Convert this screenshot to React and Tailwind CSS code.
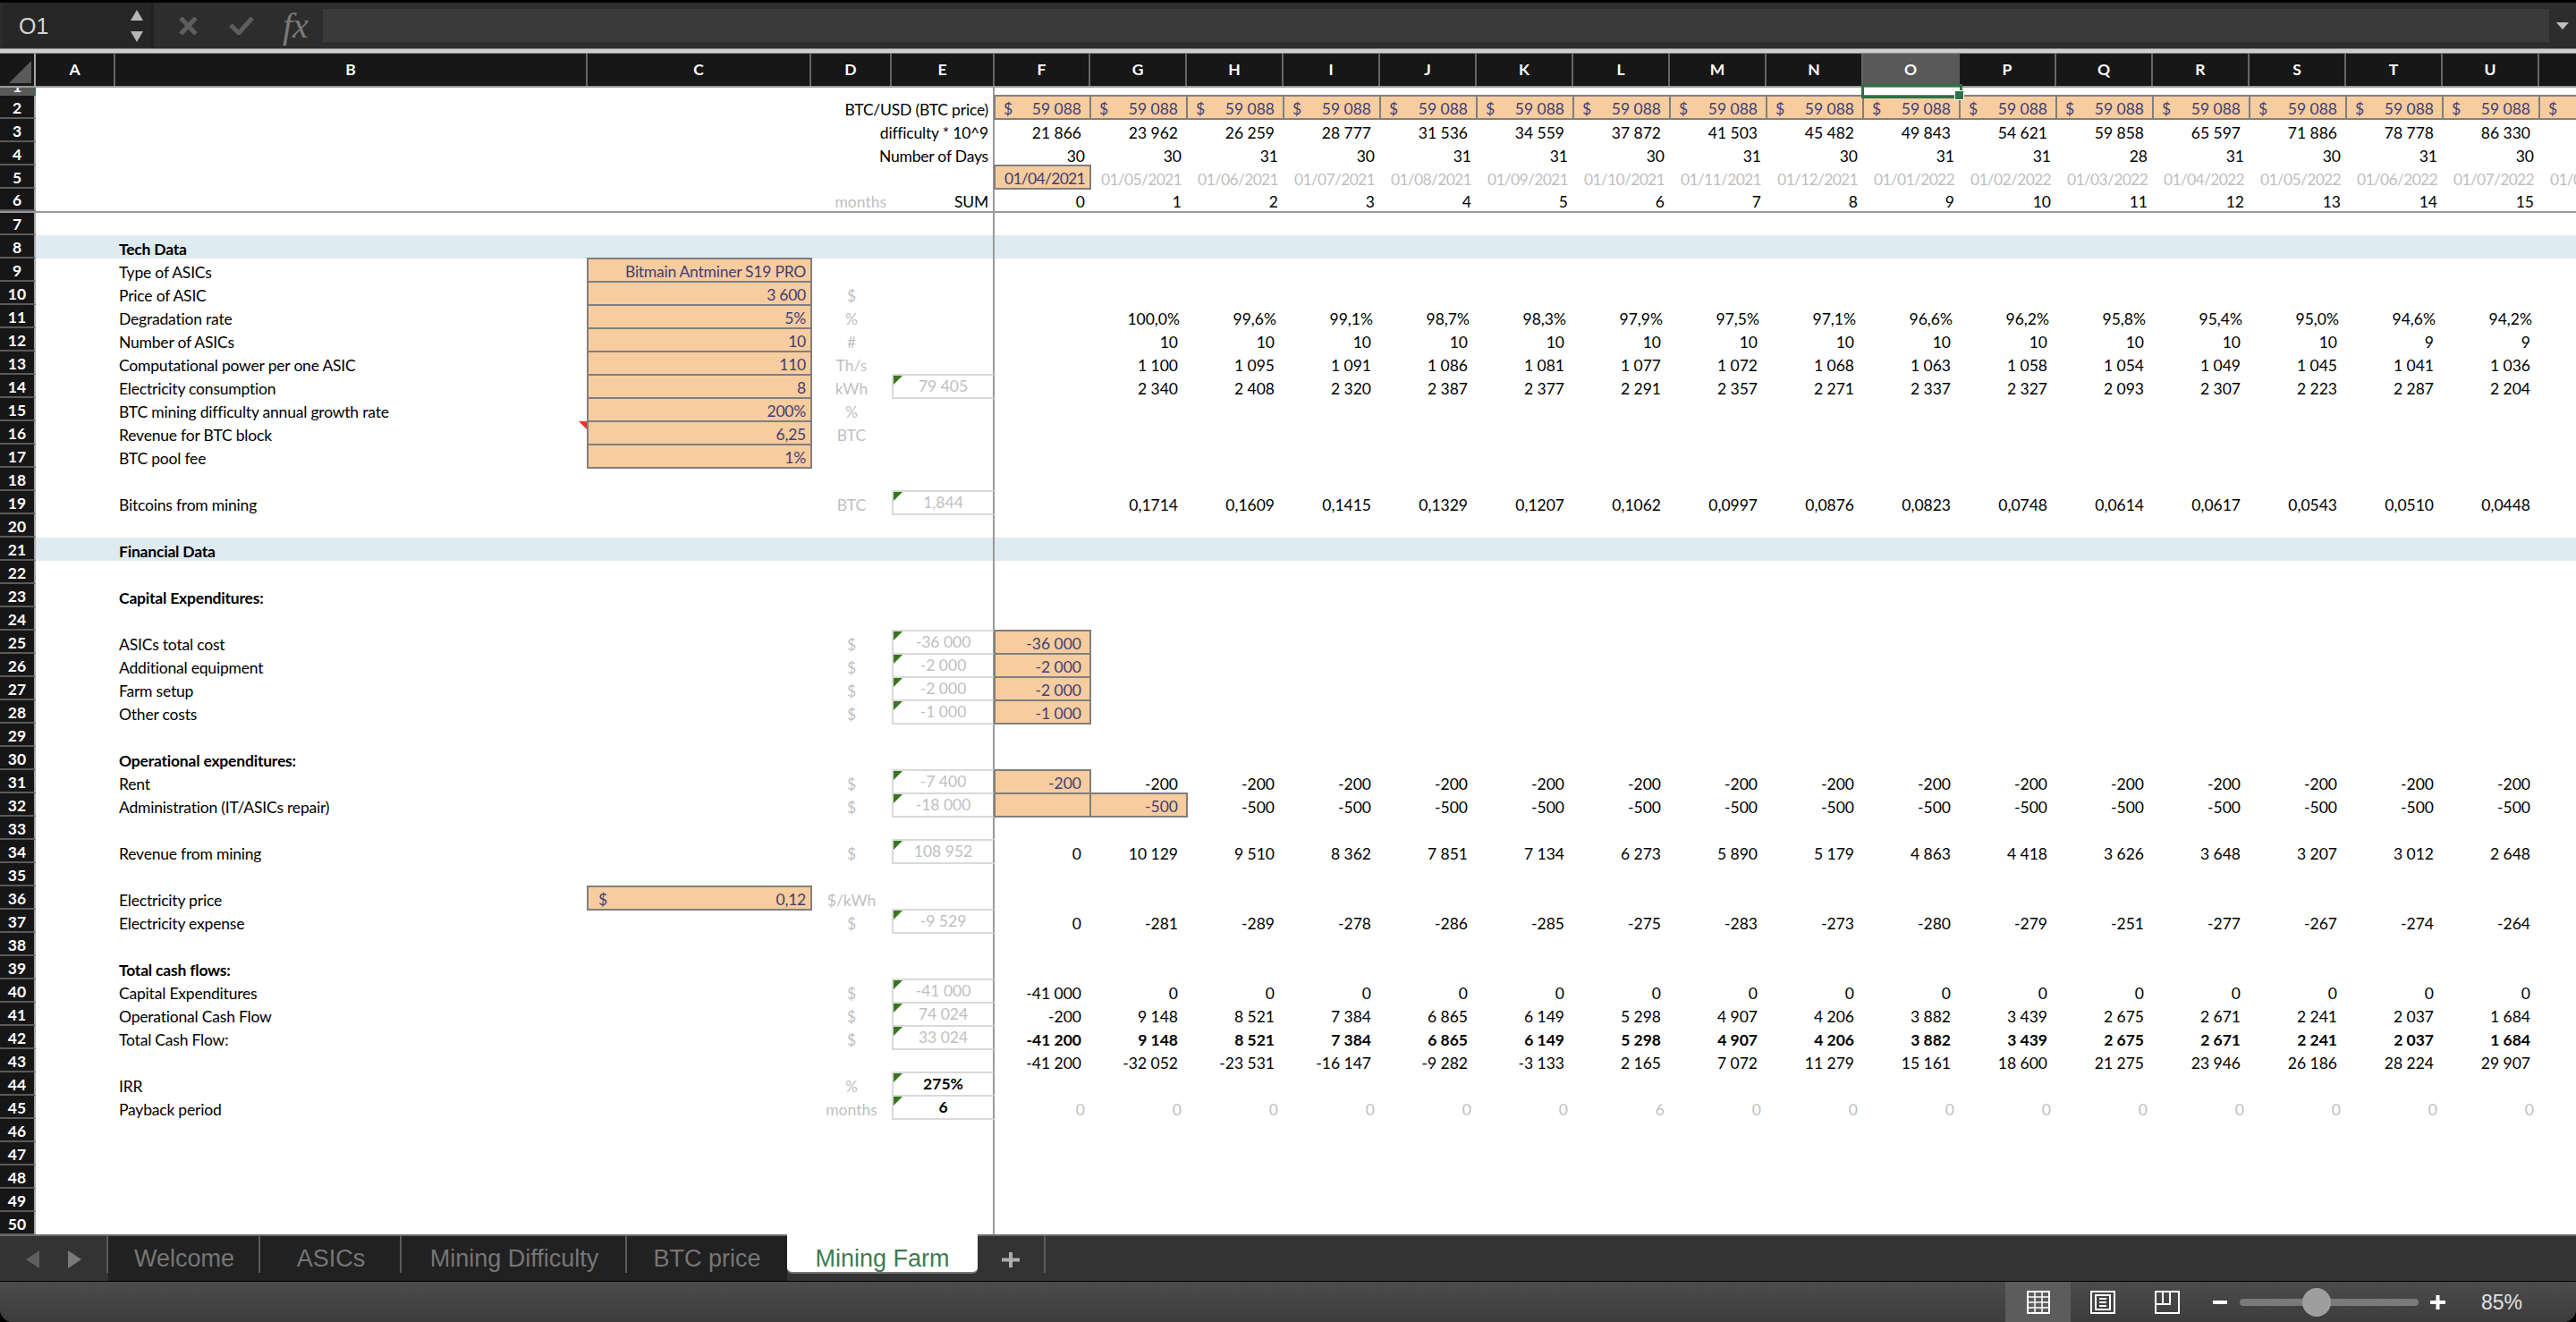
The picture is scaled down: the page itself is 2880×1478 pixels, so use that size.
import React from 'react';

// sheet columns: row header, A..E, F..V
const GRID = 'grid grid-cols-[40px_89px_528px_250px_90px_115px_107px_repeat(16,108px)]';
const LETTERS = 'ABCDEFGHIJKLMNOPQRSTU'.split('');

const list = (s) => s.split(',').map((v) => v.trim());
const dates = list('01/04/2021,01/05/2021,01/06/2021,01/07/2021,01/08/2021,01/09/2021,01/10/2021,01/11/2021,01/12/2021,01/01/2022,01/02/2022,01/03/2022,01/04/2022,01/05/2022,01/06/2022,01/07/2022,01/08/2022');
const pct = list('100.0%,99.6%,99.1%,98.7%,98.3%,97.9%,97.5%,97.1%,96.6%,96.2%,95.8%,95.4%,95.0%,94.6%,94.2%').map((v) => v.replace('.', ','));
const btc = ['0,1714', '0,1609', '0,1415', '0,1329', '0,1207', '0,1062', '0,0997', '0,0876', '0,0823', '0,0748', '0,0614', '0,0617', '0,0543', '0,0510', '0,0448'];
const opCash = list('9 148,8 521,7 384,6 865,6 149,5 298,4 907,4 206,3 882,3 439,2 675,2 671,2 241,2 037,1 684');

const ROWS = {
  2: { eRight: 'BTC/USD (BTC price)', vals: [...Array(16).fill('59 088'), ''], orange: 17, dollar: true },
  3: { eRight: 'difficulty * 10^9', vals: list('21 866,23 962,26 259,28 777,31 536,34 559,37 872,41 503,45 482,49 843,54 621,59 858,65 597,71 886,78 778,86 330') },
  4: { eRight: 'Number of Days', vals: list('30,30,31,30,31,31,30,31,30,31,31,28,31,30,31,30'), pr: 'pr-[6px]' },
  5: { vals: dates, orange: 1, muted: true, pr: 'pr-[6px] tracking-[-0.7px]', orangePr: 'pr-[5px] tracking-[-0.7px]' },
  6: { dRight: 'months', eRight: 'SUM', vals: Array.from({ length: 16 }, (_, i) => String(i)), pr: 'pr-[6px]' },
  8: { label: 'Tech Data', bold: true, band: true },
  9: { label: 'Type of ASICs', c: 'Bitmain Antminer S19 PRO' },
  10: { label: 'Price of ASIC', c: '3 600', d: '$' },
  11: { label: 'Degradation rate', c: '5%', d: '%', vals: [null, ...pct], pr: 'pr-[8px]' },
  12: { label: 'Number of ASICs', c: '10', d: '#', vals: [null, ...list('10,10,10,10,10,10,10,10,10,10,10,10,10,9,9')] },
  13: { label: 'Computational power per one ASIC', c: '110', d: 'Th/s', vals: [null, ...list('1 100,1 095,1 091,1 086,1 081,1 077,1 072,1 068,1 063,1 058,1 054,1 049,1 045,1 041,1 036')] },
  14: { label: 'Electricity consumption', c: '8', d: 'kWh', e: '79 405', vals: [null, ...list('2 340,2 408,2 320,2 387,2 377,2 291,2 357,2 271,2 337,2 327,2 093,2 307,2 223,2 287,2 204')] },
  15: { label: 'BTC mining difficulty annual growth rate', c: '200%', d: '%' },
  16: { label: 'Revenue for BTC block', c: '6,25', d: 'BTC', note: true },
  17: { label: 'BTC pool fee', c: '1%' },
  19: { label: 'Bitcoins from mining', d: 'BTC', e: '1,844', vals: [null, ...btc] },
  21: { label: 'Financial Data', bold: true, band: true },
  23: { label: 'Capital Expenditures:', bold: true },
  25: { label: 'ASICs total cost', d: '$', e: '-36 000', vals: ['-36 000'], orange: 1 },
  26: { label: 'Additional equipment', d: '$', e: '-2 000', vals: ['-2 000'], orange: 1 },
  27: { label: 'Farm setup', d: '$', e: '-2 000', vals: ['-2 000'], orange: 1 },
  28: { label: 'Other costs', d: '$', e: '-1 000', vals: ['-1 000'], orange: 1 },
  30: { label: 'Operational expenditures:', bold: true },
  31: { label: 'Rent', d: '$', e: '-7 400', vals: Array(16).fill('-200'), orange: 1 },
  32: { label: 'Administration (IT/ASICs repair)', d: '$', e: '-18 000', vals: [null, ...Array(15).fill('-500')], orange: 2 },
  34: { label: 'Revenue from mining', d: '$', e: '108 952', vals: list('0,10 129,9 510,8 362,7 851,7 134,6 273,5 890,5 179,4 863,4 418,3 626,3 648,3 207,3 012,2 648') },
  36: { label: 'Electricity price', c: '0,12', cDollar: true, d: '$/kWh' },
  37: { label: 'Electricity expense', d: '$', e: '-9 529', vals: list('0,-281,-289,-278,-286,-285,-275,-283,-273,-280,-279,-251,-277,-267,-274,-264') },
  39: { label: 'Total cash flows:', bold: true },
  40: { label: 'Capital Expenditures', d: '$', e: '-41 000', vals: ['-41 000', ...Array(15).fill('0')] },
  41: { label: 'Operational Cash Flow', d: '$', e: '74 024', vals: ['-200', ...opCash] },
  42: { label: 'Total Cash Flow:', d: '$', e: '33 024', vals: ['-41 200', ...opCash], boldVals: true },
  43: { vals: list('-41 200,-32 052,-23 531,-16 147,-9 282,-3 133,2 165,7 072,11 279,15 161,18 600,21 275,23 946,26 186,28 224,29 907') },
  44: { label: 'IRR', d: '%', e: '275%', eBold: true },
  45: { label: 'Payback period', d: 'months', e: '6', eBold: true, vals: list('0,0,0,0,0,0,6,0,0,0,0,0,0,0,0,0'), muted: true, pr: 'pr-[6px]' },
};

const RowHead = ({ n, active }) => (
  <div className={`flex items-end justify-center overflow-hidden font-bold text-white border-r-2 ${active ? 'bg-[#595959] border-r-[#2f6f48]' : 'bg-[#161616] border-r-[#a8a8a8] border-b-2 border-b-[#5a5a5a]'}`}>
    {n}
  </div>
);

const CommentMark = () => (
  <span className="absolute left-0 top-0 w-[10px] h-[10px] bg-[#38761d] [clip-path:polygon(0_0,100%_0,0_100%)]" />
);

const ValueCell = ({ row, value, index }) => {
  const isOrange = index < (row.orange || 0);
  if (isOrange) {
    return (
      <div className={`flex items-end justify-end whitespace-nowrap -mx-[1px] -my-[1px] border-2 border-[#7f7f7f] bg-[#f7cc9e] text-[#3f3f76] relative ${row.orangePr || 'pr-[9px]'}`}>
        {row.dollar && <span className="absolute left-[9px] bottom-0">$</span>}
        {value}
      </div>
    );
  }
  if (!value) return <div />;
  const tone = row.muted ? 'text-[#bfbfbf]' : row.boldVals ? 'font-bold text-black' : 'text-black';
  return (
    <div className={`flex items-end justify-end whitespace-nowrap ${row.pr || 'pr-[10px]'} ${tone}`}>
      {value}
    </div>
  );
};

const SheetRow = ({ n }) => {
  const row = ROWS[n] || {};
  const height = n === 6 ? 'h-[27px] border-b-2 border-[#9a9a9a]' : n === 7 ? 'h-[25px]' : 'h-[26px]';
  return (
    <div className={`${GRID} ${height} ${row.band ? 'bg-[#deebf1]' : ''}`}>
      <RowHead n={n} />
      <div />
      <div className={`relative flex items-end pl-[4px] whitespace-nowrap tracking-[-0.2px] text-black ${row.bold ? 'font-bold' : ''}`}>
        {row.label}
        {row.note && <span className="absolute right-0 top-0 w-[10px] h-[10px] bg-[#ee3322] [clip-path:polygon(0_0,100%_0,100%_100%)]" />}
      </div>
      {row.c ? (
        <div className="relative flex items-end justify-end whitespace-nowrap tracking-[-0.25px] -mx-[1px] -my-[1px] border-2 border-[#7f7f7f] bg-[#f7cc9e] text-[#3f3f76] pr-[5px]">
          {row.cDollar && <span className="absolute left-[11px] bottom-0">$</span>}
          {row.c}
        </div>
      ) : <div />}
      {row.dRight ? (
        <div className="flex items-end justify-end pr-[6px] text-[#bfbfbf]">{row.dRight}</div>
      ) : (
        <div className="flex items-end justify-center text-[#bfbfbf]">{row.d}</div>
      )}
      {row.e ? (
        <div className={`relative flex items-center justify-center -mt-[1px] -mb-[1px] border-y-2 border-l-2 border-[#d9d9d9] border-r-2 border-r-[#9a9a9a] ${row.eBold ? 'font-bold text-black' : 'text-[#bfbfbf]'}`}>
          <CommentMark />
          {row.e}
        </div>
      ) : (
        <div className="flex items-end justify-end whitespace-nowrap pr-[5px] tracking-[-0.2px] border-r-2 border-[#9a9a9a] text-black">
          {row.eRight}
        </div>
      )}
      {(row.vals || []).map((value, i) => (
        <ValueCell key={i} row={row} value={value} index={i} />
      ))}
    </div>
  );
};

const Toolbar = () => (
  <div className="flex h-[51px] bg-[#2d2d2d] items-stretch">
    <div className="ml-[3px] w-[165px] my-[1px] bg-[#262626] flex items-center relative">
      <span className="ml-[18px] text-[25px] text-[#d4d4d4] [font-family:'Liberation_Sans',sans-serif]">O1</span>
      <svg className="absolute left-[143px] top-[7px]" width="14" height="36" viewBox="0 0 14 36">
        <path d="M7 0 L14 12 L0 12 Z M0 24 L14 24 L7 36 Z" fill="#b5b5b5" />
      </svg>
    </div>
    <div className="w-[4px] bg-[#232323]" />
    <svg className="ml-[28px] self-center" width="21" height="20" viewBox="0 0 21 20">
      <path d="M2 1 L19 19 M19 1 L2 19" stroke="#5e5e5e" strokeWidth="5" fill="none" />
    </svg>
    <svg className="ml-[35px] self-center" width="28" height="20" viewBox="0 0 28 20">
      <path d="M2 9 L11 18 L26 1" stroke="#5e5e5e" strokeWidth="5" fill="none" />
    </svg>
    <span className="ml-[32px] w-[45px] self-center text-[40px] leading-[40px] italic text-[#7a7a7a] [font-family:'Liberation_Serif',serif]">fx</span>
    <div className="flex-1 my-[7px] bg-[#3a3a3a]" />
    <svg className="mx-[8px] self-center" width="14" height="8" viewBox="0 0 14 8">
      <path d="M0 0 L14 0 L7 8 Z" fill="#bdbdbd" />
    </svg>
  </div>
);

const ColumnHeaders = () => (
  <div className={`${GRID} h-[38px] border-b-2 border-[#9a9a9a]`}>
    <div className="bg-[#171717] border-r-2 border-[#a8a8a8] flex items-end justify-end pr-[3px] pb-[3px]">
      <svg width="25" height="25" viewBox="0 0 25 25"><path d="M25 0 L25 25 L0 25 Z" fill="#5a5a5a" /></svg>
    </div>
    {LETTERS.map((l) => (
      <div key={l} className={`flex items-center justify-center font-bold text-white border-r-2 ${l === 'O' ? 'bg-[#595959] border-[#595959]' : 'bg-[#171717] border-[#666]'}`}>
        {l}
      </div>
    ))}
    <div className="bg-[#171717]" />
  </div>
);

const Sheet = () => (
  <div className="relative flex-1 min-h-0 overflow-hidden bg-white">
    <ColumnHeaders />
    <div className={`${GRID} h-[9px] overflow-hidden`}>
      <RowHead n={1} active />
      <div /><div /><div /><div />
      <div className="border-r-2 border-[#9a9a9a]" />
    </div>
    {Array.from({ length: 49 }, (_, i) => i + 2).map((n) => <SheetRow key={n} n={n} />)}
    {/* selected cell O1 */}
    <div className="absolute left-[2081px] top-[34px] w-[113px] h-[16px] border-[3px] border-[#2f6f48]" />
    <div className="absolute left-[2185px] top-[41px] w-[11px] h-[11px] bg-[#2f6f48] border border-white" />
  </div>
);

const Tab = ({ children, className }) => (
  <div className={`relative flex items-center justify-center bg-[#212121] text-[#767676] text-[27px] ${className}`}>
    {children}
    <span className="absolute right-0 top-0 h-[41px] w-[2px] bg-[#5a5a5a]" />
  </div>
);

const TabBar = () => (
  <div className="flex h-[53px] bg-[#333] border-t-2 border-[#6a6a6a] border-b border-b-black [font-family:'Liberation_Sans',sans-serif]">
    <div className="w-[121px] h-[41px] flex items-start pt-[16px] pl-[29px] gap-[32px] border-r-2 border-[#5a5a5a]">
      <svg width="15" height="20" viewBox="0 0 15 20"><path d="M15 0 L15 20 L0 10 Z" fill="#5e5e5e" /></svg>
      <svg width="15" height="20" viewBox="0 0 15 20"><path d="M0 0 L0 20 L15 10 Z" fill="#7a7a7a" /></svg>
    </div>
    <Tab className="w-[170px]">Welcome</Tab>
    <Tab className="w-[158px]">ASICs</Tab>
    <Tab className="w-[252px]">Mining Difficulty</Tab>
    <div className="w-[179px] flex items-center justify-center bg-[#212121] text-[#767676] text-[27px]">BTC price</div>
    <div className="w-[213px] -mt-[2px] h-[44px] flex items-center justify-center pt-[11px] bg-white text-[#3c7d4f] text-[27px] rounded-b-[6px] border-b-2 border-[#777] font-medium">Mining Farm</div>
    <div className="w-[76px] h-[41px] flex items-start justify-center pt-[18px] border-r-2 border-[#5a5a5a]">
      <svg width="20" height="17" viewBox="0 0 20 17"><path d="M10 0 V17 M0 8.5 H20" stroke="#adadad" strokeWidth="4" fill="none" /></svg>
    </div>
  </div>
);

const StatusBar = () => (
  <div className="flex items-stretch justify-end h-[45px] pr-[55px] rounded-b-[14px] bg-gradient-to-b from-[#4c4c4c] to-[#3c3c3c]">
    <div className="w-[73px] bg-[#5c5c5c] flex items-center justify-center">
      <svg width="26" height="26" viewBox="0 0 26 26" fill="none" stroke="#fff" strokeWidth="2">
        <rect x="1" y="1" width="24" height="24" />
        <path d="M9 1 V25 M17 1 V25 M1 7 H25 M1 13 H25 M1 19 H25" strokeWidth="1.5" />
      </svg>
    </div>
    <div className="w-[72px] flex items-center justify-center">
      <svg width="28" height="26" viewBox="0 0 28 26" fill="none" stroke="#fff" strokeWidth="2">
        <rect x="1" y="1" width="26" height="24" />
        <rect x="6" y="5" width="16" height="16" />
        <path d="M10 9 H18 M10 13 H18 M10 17 H18" />
      </svg>
    </div>
    <div className="w-[72px] flex items-center justify-center">
      <svg width="28" height="26" viewBox="0 0 28 26" fill="none" stroke="#fff" strokeWidth="2">
        <rect x="1" y="1" width="26" height="24" />
        <path d="M1 15 H17 V1 M9 1 V15" />
      </svg>
    </div>
    <svg className="ml-[15px] self-center" width="16" height="4" viewBox="0 0 16 4"><rect width="16" height="4" fill="#fff" /></svg>
    <div className="relative ml-[14px] w-[200px] h-[8px] self-center rounded-full bg-[#7a7a7a]">
      <div className="absolute left-[70px] -top-[12px] w-[32px] h-[32px] rounded-full bg-[#9e9e9e]" />
    </div>
    <svg className="ml-[13px] self-center" width="17" height="16" viewBox="0 0 17 16"><path d="M8.5 0 V16 M0 8 H17" stroke="#fff" strokeWidth="4" fill="none" /></svg>
    <span className="ml-[40px] w-[51px] self-center text-[23px] text-[#e2e2e2] whitespace-nowrap [font-family:'Liberation_Sans',sans-serif]">85%</span>
  </div>
);

export default function App() {
  return (
    <div className="w-[2880px] h-[1478px] flex flex-col overflow-hidden bg-black text-[17.5px] leading-[20px] [font-family:Lato,sans-serif]">
      <div className="h-[3px] bg-black" />
      <Toolbar />
      <div className="h-[6px] bg-[#cfcfcf] border-y border-[#8a8a8a]" />
      <Sheet />
      <TabBar />
      <StatusBar />
    </div>
  );
}
